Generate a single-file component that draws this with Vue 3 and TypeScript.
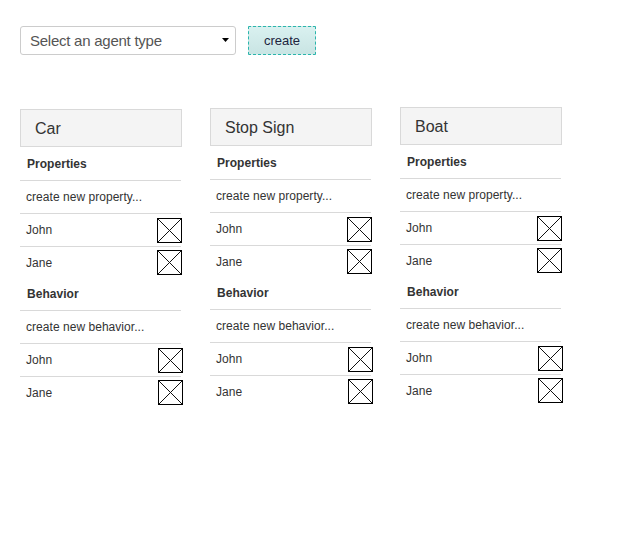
<script setup lang="ts">
interface Section {
  title: string
  action: string
  items: string[]
}
interface Agent {
  name: string
  sections: Section[]
}

const makeSections = (): Section[] => [
  { title: 'Properties', action: 'create new property...', items: ['John', 'Jane'] },
  { title: 'Behavior', action: 'create new behavior...', items: ['John', 'Jane'] },
]

const agents: Agent[] = ['Car', 'Stop Sign', 'Boat'].map((name) => ({
  name,
  sections: makeSections(),
}))
</script>

<template>
  <main class="page">
    <div class="toolbar">
      <div class="select" role="combobox" tabindex="0">
        <span>Select an agent type</span>
        <svg class="caret" width="7" height="4" viewBox="0 0 7 4"><path d="M0 0H7L3.5 4Z" fill="#000" /></svg>
      </div>
      <button class="create" type="button">create</button>
    </div>

    <div class="agents">
      <article v-for="agent in agents" :key="agent.name" class="agent">
        <h2 class="name">{{ agent.name }}</h2>
        <section v-for="section in agent.sections" :key="section.title" class="section">
          <h3 class="title">{{ section.title }}</h3>
          <div class="row">{{ section.action }}</div>
          <div v-for="item in section.items" :key="item" class="row item">
            <span>{{ item }}</span>
            <svg class="box" width="25" height="25" viewBox="0 0 25 25">
              <path d="M1 1L24 24M24 1L1 24" stroke="#111" stroke-width="1" />
              <rect x="0.5" y="0.5" width="24" height="24" fill="none" stroke="#000" shape-rendering="crispEdges" />
            </svg>
          </div>
        </section>
      </article>
    </div>
  </main>
</template>

<style>
body {
  background: #fff;
}
</style>

<style scoped>
.page {
  box-sizing: border-box;
  height: 535px;
  padding: 26px 20px 0;
  font-family: "Liberation Sans", Arial, sans-serif;
  color: #333;
}
.toolbar {
  display: flex;
  gap: 12px;
  height: 29px;
}
.select {
  box-sizing: border-box;
  display: flex;
  align-items: center;
  justify-content: space-between;
  width: 216px;
  padding: 0 6px 0 9px;
  border: 1px solid #ccc;
  border-radius: 3px;
  font-size: 15px;
  letter-spacing: -0.25px;
  color: #555;
  white-space: nowrap;
}
.caret {
  margin-top: -1px;
}
.create {
  box-sizing: border-box;
  width: 68px;
  padding: 0;
  border: 1px dashed #2bb5ac;
  border-radius: 1px;
  background: linear-gradient(#d9f1f0, #c9e4e3);
  font: 13px "Liberation Sans", Arial, sans-serif;
  color: #1c2440;
}
.agents {
  display: flex;
  gap: 28px;
  margin-top: 54px;
}
.agent {
  width: 162px;
}
.agent:nth-child(2) {
  margin-top: -1px;
}
.agent:nth-child(3) {
  margin-top: -2px;
}
.name {
  box-sizing: border-box;
  height: 38px;
  margin: 0;
  padding-left: 14px;
  border: 1px solid #d9d9d9;
  background: #f4f4f4;
  font-size: 16px;
  font-weight: 400;
  line-height: 37px;
}
.section {
  height: 130px;
  font-size: 12px;
  letter-spacing: 0.04px;
}
.title {
  box-sizing: border-box;
  height: 34px;
  margin: 0 1px 0 0;
  padding-left: 7px;
  border-bottom: 1px solid #d9d9d9;
  font-size: 12px;
  font-weight: 700;
  line-height: 35px;
}
.row {
  box-sizing: border-box;
  display: flex;
  justify-content: space-between;
  height: 33px;
  margin-right: 1px;
  padding-left: 6px;
  border-bottom: 1px solid #d9d9d9;
  line-height: 32px;
}
.row:last-child {
  height: 30px;
  border-bottom: 0;
}
.box {
  flex: none;
  margin: 4px -1px 0 0;
}
.row:last-child .box {
  margin-top: 3px;
}
.section:last-child .box {
  margin-right: -2px;
}
</style>
